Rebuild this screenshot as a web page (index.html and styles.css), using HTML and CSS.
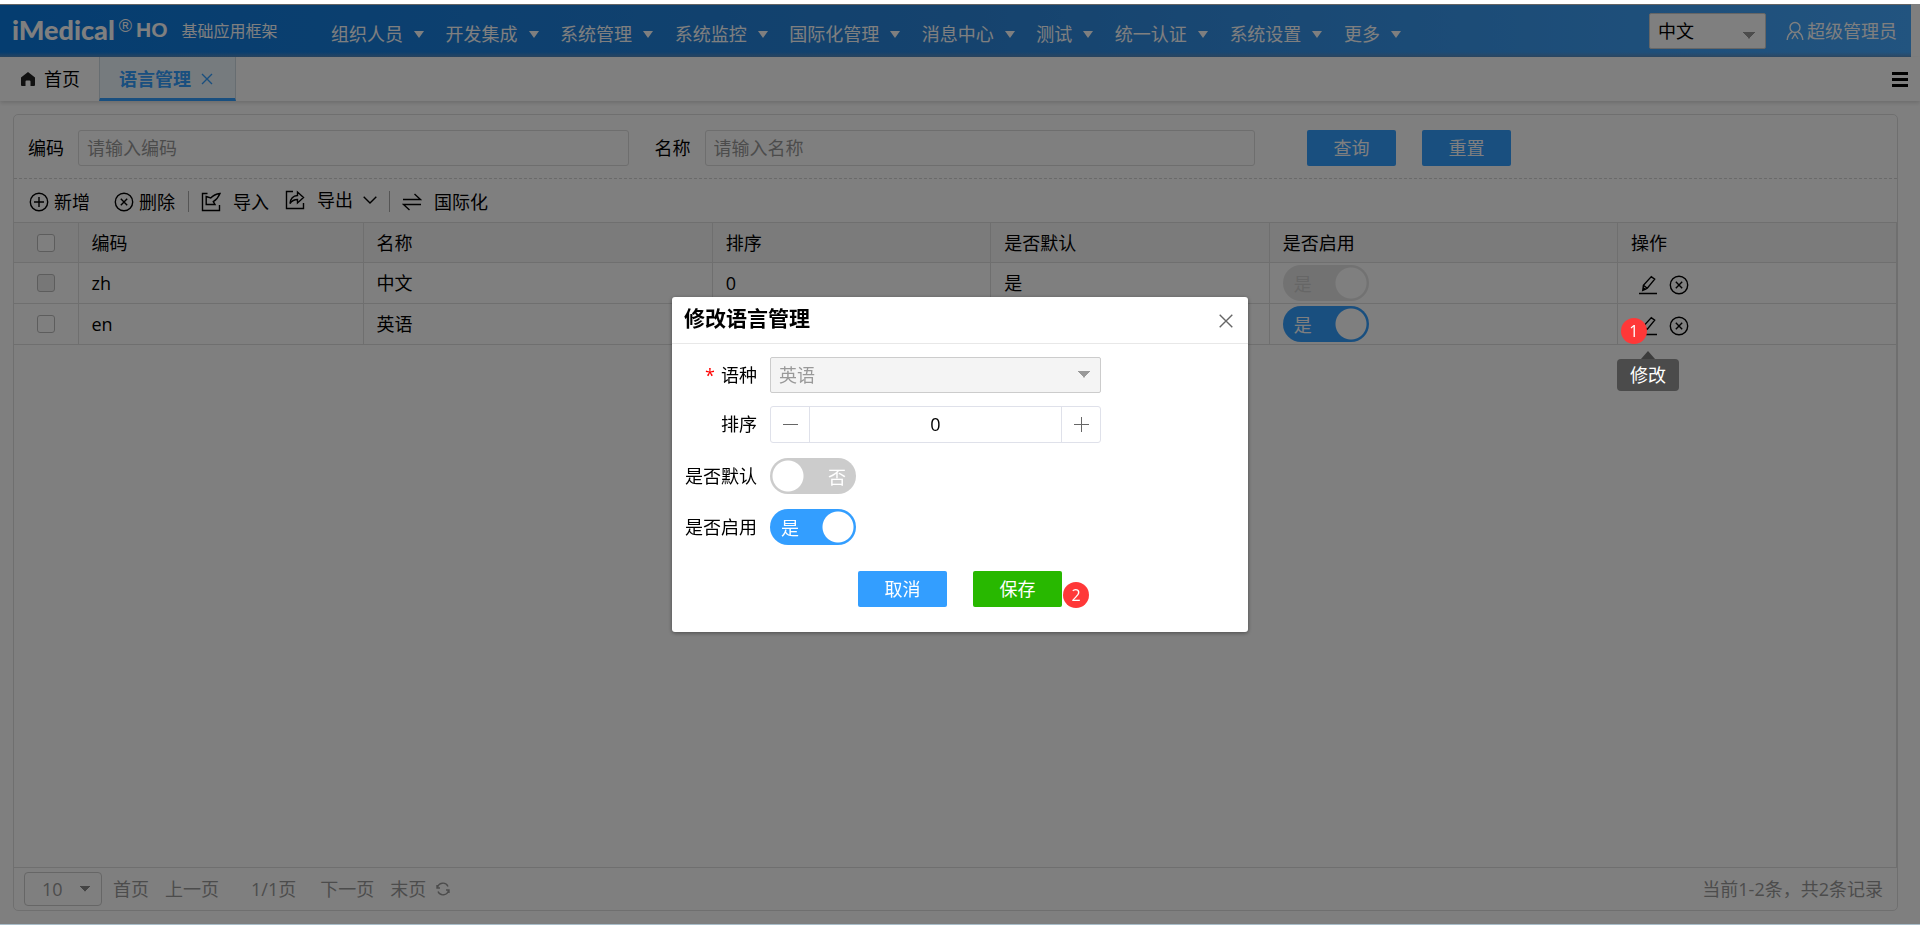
FILE: index.html
```html
<!DOCTYPE html>
<html lang="zh-CN">
<head>
<meta charset="utf-8">
<title>语言管理</title>
<link rel="stylesheet" href="styles.css">
</head>
<body>
<svg class="defs" aria-hidden="true">
  <symbol id="close-circle" viewBox="0 0 20 20"><circle cx="10" cy="10" r="8.7"/><path d="M6.8 6.8l6.4 6.4M13.2 6.8l-6.4 6.4"/></symbol>
  <symbol id="pencil" viewBox="0 0 20 20"><path d="M1 18.500h18M4.800 15.300l.6-5L13.300 1.600l3.400 2.600-7.400 9zM5.400 10.300l3.900 2.900M4.800 15.300l2.400-.9-1.800-1.400z"/></symbol>
</svg>
<div class="app">
  <header class="topbar">
    <h1 class="brand"><span class="brand-name">iMedical</span><span class="brand-reg">®</span><span class="brand-ho">HO</span><span class="brand-sub">基础应用框架</span></h1>
    <nav class="menu">
      <a href="#">组织人员<i class="caret"></i></a>
      <a href="#">开发集成<i class="caret"></i></a>
      <a href="#">系统管理<i class="caret"></i></a>
      <a href="#">系统监控<i class="caret"></i></a>
      <a href="#">国际化管理<i class="caret"></i></a>
      <a href="#">消息中心<i class="caret"></i></a>
      <a href="#">测试<i class="caret"></i></a>
      <a href="#">统一认证<i class="caret"></i></a>
      <a href="#">系统设置<i class="caret"></i></a>
      <a href="#">更多<i class="caret"></i></a>
    </nav>
    <select class="lang" aria-label="语言"><option>中文</option></select>
    <a class="user" href="#">
      <svg width="18" height="20" viewBox="0 0 18 20"><circle cx="9" cy="6.500" r="5"/><path d="M6 11C3 12.500 1.500 15.500 1.200 19M12 11c3 1.500 4.500 4.500 4.800 8M6 18l3-5 3 5"/></svg>超级管理员</a>
  </header>

  <div class="tabs">
    <a class="tab" href="#"><svg class="home" width="16" height="14" viewBox="0 0 16 14"><path d="M8 0l7 5.500V13a1 1 0 0 1-1 1H10.500V9.500a1 1 0 0 0-1-1h-3a1 1 0 0 0-1 1V14H2a1 1 0 0 1-1-1V5.500z"/></svg>首页</a>
    <a class="tab tab-active" href="#">语言管理<svg class="tab-close" width="12" height="12" viewBox="0 0 12 12"><path d="M1 1l10 10M11 1L1 11"/></svg></a>
    <button class="burger" aria-label="菜单"><span></span><span></span><span></span></button>
  </div>

  <main class="panel">
    <form class="search">
      <label for="code">编码</label>
      <input id="code" type="text" placeholder="请输入编码">
      <label class="second" for="name">名称</label>
      <input id="name" type="text" placeholder="请输入名称">
      <div class="search-actions">
        <button class="btn" type="button">查询</button>
        <button class="btn" type="button">重置</button>
      </div>
    </form>

    <div class="toolbar">
      <button class="tool tool-tight"><svg viewBox="0 0 20 20"><circle cx="10" cy="10" r="8.700"/><path d="M10 5v10M5 10h10"/></svg>新增</button>
      <button class="tool tool-tight"><svg><use href="#close-circle"/></svg>删除</button>
      <i class="divider"></i>
      <button class="tool"><svg viewBox="0 0 20 20"><path d="M6.500 1.500H1.500v17h17V13M19 1.500C15 2 12 3.500 9.700 6L5.200 4.500V12.500H14L12.300 9.700C15 8 17.500 5 19 1.500z"/></svg>导入</button>
      <button class="tool export"><svg viewBox="0 0 20 20"><path d="M8 1.500H1.500v17h17V13M5 13.500c.5-5 3-7.700 7.500-8V2l6 5.500-6 5.500V9.500c-3 0-5.500 1-7.500 4z"/></svg>导出<svg class="chevron" viewBox="0 0 14 8"><path d="M.7.7L7 7 13.300.7"/></svg></button>
      <i class="divider"></i>
      <button class="tool"><svg viewBox="0 0 20 20"><path d="M1 7.500h17.500L12.500 2M19 12.500H1.500l6 5.500"/></svg>国际化</button>
    </div>

    <div class="grid-wrap">
      <table class="grid">
        <colgroup><col class="c-check"><col class="c-code"><col class="c-name"><col class="c-sort"><col class="c-def"><col class="c-use"><col class="c-op"></colgroup>
        <thead>
          <tr><th><input type="checkbox" aria-label="全选"></th><th>编码</th><th>名称</th><th>排序</th><th>是否默认</th><th>是否启用</th><th>操作</th></tr>
        </thead>
        <tbody>
          <tr>
            <td><input type="checkbox" disabled aria-label="选择 zh"></td><td>zh</td><td>中文</td><td>0</td><td>是</td>
            <td><label class="switch"><input type="checkbox" role="switch" checked disabled><span>是</span></label></td>
            <td class="ops"><button aria-label="修改"><svg><use href="#pencil"/></svg></button><button aria-label="删除"><svg><use href="#close-circle"/></svg></button></td>
          </tr>
          <tr>
            <td><input type="checkbox" aria-label="选择 en"></td><td>en</td><td>英语</td><td></td><td></td>
            <td><label class="switch"><input type="checkbox" role="switch" checked><span>是</span></label></td>
            <td class="ops"><button aria-label="修改"><svg><use href="#pencil"/></svg></button><button aria-label="删除"><svg><use href="#close-circle"/></svg></button><span class="badge badge-edit">1</span><span class="tooltip" role="tooltip">修改</span></td>
          </tr>
        </tbody>
      </table>
    </div>

    <footer class="pager">
      <select class="page-size" aria-label="每页条数"><option>10</option></select>
      <a href="#">首页</a>
      <a href="#">上一页</a>
      <span class="page-no">1/1页</span>
      <a href="#">下一页</a>
      <a href="#">末页</a>
      <button class="refresh" aria-label="刷新"><svg width="14" height="14" viewBox="0 0 14 14"><path d="M1.500 6A5.500 5.500 0 0 1 12 4.500M12.500 8A5.500 5.500 0 0 1 2 9.500M1 3v3h3M13 11V8h-3"/></svg></button>
      <span class="total">当前1-2条，共2条记录</span>
    </footer>
  </main>
</div>

<div class="mask">
  <section class="modal" role="dialog" aria-labelledby="dlg-title">
    <header class="modal-head">
      <h2 id="dlg-title">修改语言管理</h2>
      <button class="modal-close" aria-label="关闭"><svg width="14" height="14" viewBox="0 0 14 14"><path d="M.7.7l12.600 12.600M13.300.7L.7 13.300"/></svg></button>
    </header>
    <form class="modal-form">
      <label for="lang"><em>*</em>语种</label>
      <select id="lang" disabled><option>英语</option></select>
      <label for="sort">排序</label>
      <div class="stepper">
        <button type="button" aria-label="减少"><svg width="15" height="15" viewBox="0 0 15 15"><path d="M0 7.500h15"/></svg></button>
        <input id="sort" type="text" value="0">
        <button type="button" aria-label="增加"><svg width="15" height="15" viewBox="0 0 15 15"><path d="M0 7.500h15M7.500 0v15"/></svg></button>
      </div>
      <label class="sw-row" for="isdef">是否默认</label>
      <div class="switch sw-row"><input id="isdef" type="checkbox" role="switch"><span>否</span></div>
      <label class="sw-row" for="isuse">是否启用</label>
      <div class="switch sw-row"><input id="isuse" type="checkbox" role="switch" checked><span>是</span></div>
    </form>
    <div class="modal-actions">
      <button class="btn">取消</button>
      <div class="save-wrap"><button class="btn btn-save">保存</button><span class="badge badge-save">2</span></div>
    </div>
  </section>
</div>
</body>
</html>
```

FILE: styles.css
```css
* { box-sizing: border-box; }

body {
  margin: 0;
  background: #fff;
  color: #000;
  font: 18px/24px "Open Sans", "Noto Sans CJK SC", sans-serif;
}

button, input, select { font: inherit; color: inherit; margin: 0; }
button { background: none; border: 0; padding: 0; }
a { color: inherit; text-decoration: none; }
svg { fill: none; stroke: currentColor; stroke-width: 1.400; display: block; }
.defs { position: absolute; width: 0; height: 0; }

.app {
  display: flex;
  flex-direction: column;
  min-height: 100vh;
  padding-top: 4px;
  border-bottom: 1px solid #a9bdc9;
}

/* top bar */
.topbar {
  display: flex;
  align-items: center;
  height: 53px;
  margin-right: 9px;
  padding: 0 14px 2px 12px;
  border-top: 1px solid #c8c8c8;
  background: linear-gradient(to bottom, transparent 47px, #5f8cba 53px), linear-gradient(to right, #0a7ae0, #2b86dc 50%, #44a8ff);
  color: #fff;
}

.brand { display: flex; align-items: center; margin: 0; flex: 0 0 319px; font-weight: 400; height: 48px; }
.brand-name { font: 900 27px/46px Lato, sans-serif; }
.brand-reg { font: 18px/40px "Liberation Sans", sans-serif; margin: 0 4px; align-self: flex-start; }
.brand-ho { font: bold 21px/48px "Liberation Sans", sans-serif; }
.brand-sub { font-size: 16px; margin-left: 14px; padding-top: 2px; }

.menu { display: flex; justify-content: space-between; flex: 0 1 1070px; padding-top: 8px; }
.menu a { display: flex; align-items: center; gap: 11px; white-space: nowrap; }
.caret { border: 5px solid transparent; border-top: 7px solid currentColor; border-bottom: 0; }

select {
  appearance: none;
  border: 1px solid #ccc;
  border-radius: 2px;
  background-color: #fff;
  background-image: linear-gradient(to bottom left, #999 50%, transparent 51%), linear-gradient(to bottom right, #999 50%, transparent 51%);
  background-size: 6px 7px;
  background-repeat: no-repeat;
}
.lang {
  width: 117px;
  height: 36px;
  margin: 2px 2px 0 auto;
  padding: 0 8px;
  background-position: right 16px top 18px, right 10px top 18px;
  color: #000;
}
.user { display: flex; align-items: center; gap: 3px; margin-left: 18px; padding-top: 2px; white-space: nowrap; }

/* tabs */
.tabs {
  display: flex;
  align-items: stretch;
  height: 44px;
  padding-right: 12px;
  box-shadow: 0 2px 4px rgba(0, 0, 0, .15);
}
.tab { display: flex; align-items: center; gap: 8px; padding: 0 19px 0 20px; }
.home { fill: #222; stroke: none; }
.tab-active {
  gap: 10px;
  padding: 3px 22px 0 19px;
  border: solid #cfdbe2;
  border-width: 0 1px;
  border-bottom: 3px solid #339eff;
  background: #edf6fc;
  color: #339eff;
  font-weight: 700;
}
.burger { display: grid; gap: 3px; margin: auto 0 auto auto; width: 16px; }
.burger span { height: 3px; background: #000; }

/* main panel */
.panel {
  display: flex;
  flex-direction: column;
  flex: 1;
  margin: 13px 22px 13px 13px;
  border: 1px solid #dfdfdf;
  border-radius: 5px;
}

.search {
  display: flex;
  align-items: center;
  padding: 15px 386px 12px 14px;
  border-bottom: 1px dashed #d5d5d5;
}
.search input {
  flex: 1;
  min-width: 0;
  height: 36px;
  margin-left: 14px;
  padding: 0 8px;
  border: 1px solid #dcdcdc;
  border-radius: 3px;
}
input::placeholder { color: #999; }
.second { margin-left: 26px; }
.search-actions { display: flex; gap: 26px; margin-left: 52px; }
.btn { width: 89px; height: 36px; border-radius: 2px; background: #339eff; color: #fff; }

.toolbar { display: flex; align-items: center; height: 43px; padding: 2px 0 0 15px; }
.tool { display: flex; align-items: center; gap: 12px; }
.tool svg { width: 20px; height: 20px; }
.tool-tight { gap: 5px; margin-right: 24px; }
.tool-tight + .divider { margin-left: -11px; }
.divider { width: 1px; height: 21px; margin: 0 12px; background: #aaa; }
.export { margin-left: 16px; padding-bottom: 4px; }
.export .chevron { width: 14px; height: 8px; margin-left: -2px; }

.grid-wrap { flex: 1; border-right: 1px solid #dfdfdf; }
.grid { width: 100%; table-layout: fixed; border-collapse: collapse; }
.c-check { width: 64px; }
.c-code { width: 15.150%; }
.c-name { width: 18.550%; }
.c-sort, .c-def { width: 14.800%; }
.c-use { width: 18.500%; }
.grid th, .grid td {
  height: 41px;
  padding: 0 13px;
  border: 1px solid #dfdfdf;
  text-align: left;
  font-weight: 400;
}
.grid th { height: 40px; background: #f6f6f6; }
.grid th:first-child, .grid td:first-child { text-align: center; border-left: 0; padding: 0; }
.grid th:last-child, .grid td:last-child { border-right: 0; }
.grid td > input, .grid th > input {
  appearance: none;
  display: block;
  width: 18px;
  height: 18px;
  margin: 0 auto;
  border: 1px solid #bbb;
  border-radius: 3px;
  background: #fff;
}
.grid td > input:disabled { background: #eee; }

.switch { position: relative; display: block; width: 86px; height: 36px; }
.switch input {
  appearance: none;
  display: block;
  width: 86px;
  height: 36px;
  border-radius: 18px;
  background: radial-gradient(circle at 18px 18px, #fff 15px, transparent 16px) #ccc;
}
.switch input:checked { background: radial-gradient(circle at 68px 18px, #fff 15px, transparent 16px) #339eff; }
.switch input:disabled { background-color: #e5e5e5; }
.switch span { position: absolute; top: 7px; right: 10px; color: #fff; pointer-events: none; }
.switch input:checked + span { left: 11px; right: auto; }
.switch input:disabled + span { color: #ccc; }

.grid .ops { position: relative; padding-left: 20px; }
.ops button { display: inline-block; margin-right: 11px; vertical-align: middle; }
.ops svg { width: 20px; height: 20px; }

.badge {
  position: absolute;
  z-index: 20;
  width: 26px;
  height: 26px;
  border-radius: 50%;
  background: #ff3838;
  color: #fff;
  font-size: 16px;
  line-height: 26px;
  text-align: center;
}
.badge-edit { left: 3px; bottom: 0; }
.badge-save { left: 90px; top: 11px; }
.tooltip {
  position: absolute;
  z-index: 20;
  top: 55px;
  left: -1px;
  padding: 4px 13px;
  border-radius: 4px;
  background: #4b4b4b;
  color: #fff;
  white-space: nowrap;
}
.tooltip::before {
  content: "";
  position: absolute;
  left: 24px;
  top: -8px;
  border: 7px solid transparent;
  border-top: 0;
  border-bottom: 8px solid #3c3c3c;
}

/* pager */
.pager {
  display: flex;
  align-items: center;
  gap: 16px;
  height: 43px;
  padding: 0 14px 0 10px;
  border-top: 1px solid #dfdfdf;
  color: #999;
}
.page-size {
  width: 78px;
  height: 34px;
  margin-right: -5px;
  padding: 0 17px;
  border-radius: 4px;
  background-image: linear-gradient(to bottom left, #888 50%, transparent 51%), linear-gradient(to bottom right, #888 50%, transparent 51%);
  background-size: 5px 6px;
  background-position: right 16px center, right 11px center;
}
.page-no { margin: 0 8px 0 16px; }
.refresh { margin-left: -6px; }
.total { margin-left: auto; }

/* dialog */
.mask {
  position: fixed;
  inset: 4px 0 1px;
  z-index: 10;
  display: flex;
  align-items: center;
  justify-content: center;
  background: rgba(0, 0, 0, .5);
}
.modal {
  width: 576px;
  padding-bottom: 25px;
  border-radius: 3px;
  background: #fff;
  box-shadow: 0 1px 4px rgba(0, 0, 0, .4);
}
.modal-head {
  display: flex;
  align-items: center;
  justify-content: space-between;
  height: 47px;
  padding: 0 15px 0 12px;
  border-bottom: 1px solid #e8e8e8;
}
.modal-head h2 { margin: 0; padding-bottom: 4px; font-size: 21px; }
.modal-close { color: #666; padding-top: 2px; }
.modal-form {
  display: grid;
  grid-template-columns: 73px 331px;
  gap: 13px;
  align-items: center;
  padding: 13px 12px 0;
}
.modal-form label { text-align: right; white-space: nowrap; }
.modal-form em { color: #f00; font-style: normal; margin-right: 6px; }
#lang {
  height: 36px;
  padding: 0 8px;
  background-color: #f4f4f4;
  background-position: right 16px center, right 10px center;
  color: #999;
  opacity: 1;
}
.stepper { display: flex; height: 37px; border: 1px solid #dfe1ea; border-radius: 3px; }
.stepper button { display: grid; place-items: center; width: 38px; color: #666; }
.stepper svg { stroke-width: 1; }
.stepper input { flex: 1; min-width: 0; border: solid #dfe1ea; border-width: 0 1px; padding: 0; text-align: center; }
.sw-row { margin-top: 2px; }
.modal-actions { display: flex; gap: 26px; margin: 26px 0 0 186px; }
.save-wrap { position: relative; }
.btn-save { background: #28b800; }
```
